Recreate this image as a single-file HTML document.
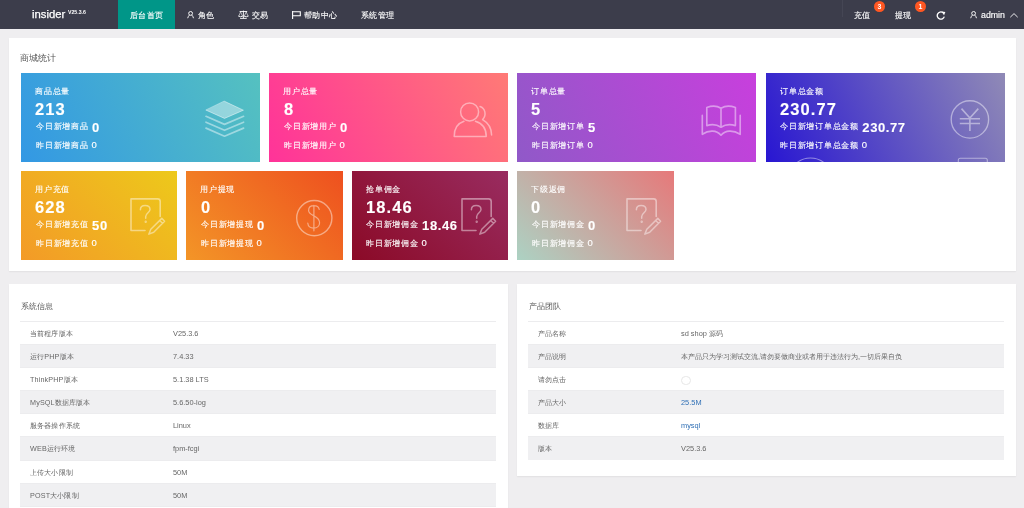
<!DOCTYPE html>
<html><head><meta charset="utf-8">
<style>
*{margin:0;padding:0;box-sizing:border-box}
html,body{width:1024px;height:508px;overflow:hidden}
.a,.t,.ptitle,.card div,.tr span{will-change:transform}
body{background:#efeef0;font-family:"Liberation Sans",sans-serif;position:relative;color:#666}
.a{position:absolute;white-space:nowrap}
#hd{position:absolute;left:0;top:0;width:1024px;height:29.2px;background:#3c3d4b}
#hd .t{position:absolute;color:#fff;font-size:8.4px;letter-spacing:0.35px;line-height:10px;top:9.6px;white-space:nowrap;-webkit-text-stroke:0.12px #fff}
.panel{position:absolute;background:#fff;box-shadow:0 0.6px 1.2px rgba(0,0,0,.06)}
.ptitle{position:absolute;font-size:8.4px;line-height:10px;color:#555;white-space:nowrap}
.card{position:absolute;height:88.5px;color:#fff;overflow:hidden;-webkit-text-stroke:0.12px #fff}
.card .l{position:absolute;left:14px;top:12.9px;font-size:8.4px;letter-spacing:0.75px;line-height:10px;white-space:nowrap}
.card .n{position:absolute;left:14.3px;top:27px;font-size:16.5px;line-height:18px;font-weight:bold;white-space:nowrap;letter-spacing:1.1px}
.card .td{position:absolute;left:14.5px;top:47.8px;font-size:8.4px;letter-spacing:0.75px;line-height:11px;white-space:nowrap}
.card .td b{font-size:13px;letter-spacing:0.6px;position:absolute;left:56.1px;top:-0.2px;line-height:13px}
.card .yd{position:absolute;left:14.5px;top:66.6px;font-size:8.4px;letter-spacing:0.75px;line-height:10px;white-space:nowrap}
.card .yd span{font-size:9.5px;letter-spacing:0;position:absolute;left:55.6px;top:-0.5px;line-height:10px}
.card svg{position:absolute;left:0;top:0}
.ic{fill:none;stroke:rgba(255,255,255,.45);stroke-width:1.5;stroke-linecap:round;stroke-linejoin:round}
.tb{position:absolute;overflow:hidden;box-shadow:inset 0.6px 0 0 #f0f0f0,inset -0.6px 0 0 #f0f0f0}
.tr{position:absolute;left:0;width:100%;height:23.16px;border-top:0.6px solid #ececee}
.tr span{position:absolute;top:0;line-height:23.5px;white-space:nowrap;color:#666}
.c1{left:10.2px;font-size:7.2px;letter-spacing:0.15px}
.c2{left:152.8px;font-size:7.4px}
.blue{color:#2f6fb5;font-weight:normal}
.circ{position:absolute;left:0;top:7.5px;width:9.5px;height:9.5px;border:0.7px solid #e6e6e6;border-radius:50%}
</style></head>
<body>
<div id="hd">
  <div class="a" style="left:31.6px;top:6.8px;font-size:11.3px;line-height:14px;color:#fff;-webkit-text-stroke:0.25px #fff">insider</div>
  <div class="a" style="left:68.3px;top:9.2px;font-size:5.2px;line-height:6px;color:#fff;font-weight:bold">V25.3.6</div>
  <div style="position:absolute;left:117.7px;top:0;width:57.7px;height:29.2px;background:#009688"></div>
  <div class="t" style="left:130px">后台首页</div>
  <svg class="a" style="left:187.4px;top:11px" width="8" height="8" viewBox="0 0 8 8"><circle cx="3.6" cy="2.4" r="1.9" fill="none" stroke="#fff" stroke-width="0.95"/><path d="M0.7 7.2 Q1.2 5.2 2.4 4.1 M6.5 7.2 Q6 5.2 4.8 4.1" stroke="#fff" stroke-width="0.95" fill="none"/></svg>
  <div class="t" style="left:198px">角色</div>
  <svg class="a" style="left:238px;top:10px" width="11" height="9" viewBox="0 0 11 9"><path d="M1.6 1.5 H9.2 M5.4 0.6 V8.3 M2.1 8.4 H8.7" stroke="#fff" stroke-width="0.9" fill="none"/><path d="M2.6 1.8 L0.9 5.9 M2.6 1.8 L4.3 5.9 M8.2 1.8 L6.5 5.9 M8.2 1.8 L9.9 5.9" stroke="#fff" stroke-width="0.6" fill="none"/><path d="M0.2 6 Q2.6 7.6 5 6 M5.8 6 Q8.2 7.6 10.6 6" stroke="#fff" stroke-width="0.9" fill="none"/></svg>
  <div class="t" style="left:251.5px">交易</div>
  <svg class="a" style="left:292px;top:11px" width="9" height="8" viewBox="0 0 9 8"><path d="M0.6 0 V8 M0.6 0.8 H8.3 V4.8 H0.6" stroke="#fff" stroke-width="1.1" fill="none"/></svg>
  <div class="t" style="left:303.5px">帮助中心</div>
  <div class="t" style="left:360.5px">系统管理</div>

  <div style="position:absolute;left:841.6px;top:0;width:0.7px;height:17px;background:rgba(255,255,255,.05)"></div>
  <div class="t" style="left:853.5px">充值</div>
  <div class="a" style="left:874px;top:0.9px;width:11px;height:11px;border-radius:50%;background:#ff5722;color:#fff;font-size:7px;font-weight:bold;line-height:11px;text-align:center">3</div>
  <div class="t" style="left:895px">提现</div>
  <div class="a" style="left:915px;top:0.9px;width:11px;height:11px;border-radius:50%;background:#ff5722;color:#fff;font-size:7px;font-weight:bold;line-height:11px;text-align:center">1</div>
  <svg class="a" style="left:935.5px;top:10.5px" width="10" height="9" viewBox="0 0 10 9"><path d="M8.3 5.6 A3.6 3.6 0 1 1 6.9 1.6" stroke="#fff" stroke-width="1.3" fill="none"/><path d="M5.6 0.4 L9.4 0.9 L8.0 4.2 Z" fill="#fff"/></svg>
  <svg class="a" style="left:970.2px;top:10.6px" width="8" height="8" viewBox="0 0 8 8"><circle cx="3.6" cy="2.4" r="1.9" fill="none" stroke="#fff" stroke-width="0.95"/><path d="M0.7 7.2 Q1.2 5.2 2.4 4.1 M6.5 7.2 Q6 5.2 4.8 4.1" stroke="#fff" stroke-width="0.95" fill="none"/></svg>
  <div class="a" style="left:980.5px;top:10px;font-size:8.8px;line-height:10px;color:#fff;-webkit-text-stroke:0.15px #fff">admin</div>
  <svg class="a" style="left:1010px;top:13px" width="8" height="4.5" viewBox="0 0 8 4.5"><path d="M0.3 4.2 L4 0.6 L7.7 4.2" stroke="#fff" stroke-width="0.9" fill="none"/></svg>
</div>

<!-- panel 1 -->
<div class="panel" style="left:9px;top:38.4px;width:1007px;height:233px"></div>
<div class="ptitle" style="left:19.5px;top:52.5px;font-size:8.7px">商城统计</div>

<div class="card" style="left:21px;top:73.2px;height:88.7px;width:239px;background:linear-gradient(65deg,#3398e4,#55c1c0)">
  <svg width="239" height="89" viewBox="0 0 239 89"><g class="ic"><path d="M203.5 28.3 L222.4 37.2 L203.5 45.4 L185.2 37.2 Z" fill="rgba(255,255,255,.4)" stroke-width="1"/><path d="M185 43.3 L203.5 51.4 L222.6 43.3 M185 49.2 L203.5 57.3 L222.6 49.2 M185 55.1 L203.5 63.2 L222.6 55.1" stroke-width="1.7"/></g></svg><div class="l">商品总量</div><div class="n">213</div>
  <div class="td">今日新增商品 <b>0</b></div><div class="yd">昨日新增商品 <span>0</span></div>
</div>
<div class="card" style="left:269.3px;top:73.2px;height:88.7px;width:239px;background:linear-gradient(65deg,#ff3399,#ff7a76)">
  <svg width="239" height="89" viewBox="0 0 239 89"><g class="ic"><circle cx="200.6" cy="38.9" r="9"/><path d="M195 48.2 C188 50.5 185 56 185.2 63.6 L217.2 63.6 C217.4 56 214 50.5 206.4 48.2"/><path d="M211 33.5 C216 35 218 42 213.6 46.6 C219.5 50 222.6 55 222.6 62"/></g></svg><div class="l">用户总量</div><div class="n">8</div>
  <div class="td">今日新增用户 <b>0</b></div><div class="yd">昨日新增用户 <span>0</span></div>
</div>
<div class="card" style="left:517px;top:73.2px;height:88.7px;width:239px;background:linear-gradient(65deg,#9059c8,#c83fdd)">
  <svg width="239" height="89" viewBox="0 0 239 89"><g class="ic" style="stroke-width:1.65" transform="translate(0 1)"><path d="M189.8 51.6 L189.8 33.5 C195 31.6 200 31.8 204 34.2 C208 31.8 213 31.6 218.4 33.5 L218.4 51.6 C213.5 50 208 50.6 204 53.2 C200 50.6 194.5 50 189.8 51.6 Z M204 34.2 L204 53.2"/><path d="M185.3 41.4 L185.3 60.3 C192 55.8 199.5 56 204 61.2 C208.5 56 216 55.8 223.2 60.3 L223.2 41.4"/></g></svg><div class="l">订单总量</div><div class="n">5</div>
  <div class="td">今日新增订单 <b>5</b></div><div class="yd">昨日新增订单 <span>0</span></div>
</div>
<div class="card" style="left:765.5px;top:73.2px;height:88.7px;width:239px;background:linear-gradient(65deg,#2816d2,#908ab6)">
  <svg width="239" height="89" viewBox="0 0 239 89"><g class="ic"><circle cx="203.9" cy="46.4" r="18.7" stroke-width="1.35"/><path d="M195.5 35.6 L203.9 45 L212.3 35.6 M193.8 45.7 H214 M193.8 50.5 H214 M203.9 45 V58" stroke-width="1.6" stroke-linecap="butt"/><rect x="192.3" y="85.2" width="29" height="12" rx="2" stroke-width="1.1"/><circle cx="44.5" cy="107" r="22" stroke-width="1.1"/></g></svg><div class="l">订单总金额</div><div class="n">230.77</div>
  <div class="td">今日新增订单总金额 <b style="left:82.3px">230.77</b></div><div class="yd">昨日新增订单总金额 <span style="left:81.8px">0</span></div>
</div>

<div class="card" style="left:21px;top:171px;width:156.3px;background:linear-gradient(45deg,#f39a27,#edc91b)">
  <svg width="157" height="89" viewBox="0 0 157 89"><g class="ic"><path d="M124 59.5 L110 59.5 L110 27.9 L136.6 27.9 Q139.2 27.9 139.2 30.5 L139.2 45.5" stroke-width="1.6"/><path d="M119.4 38.8 C119.4 35.9 121.6 34.6 124.2 34.6 C126.9 34.6 129 36.2 129 38.6 C129 41.4 124.7 42.3 124.7 45.6 L124.7 47.2"/><circle cx="124.7" cy="50.8" r="0.5" stroke-width="1.4"/><path d="M140.8 47.4 L143.6 50.2 L132.7 61.2 L127.9 63.1 L129.8 58.3 Z M138.7 49.5 L141.5 52.3"/></g></svg><div class="l">用户充值</div><div class="n">628</div>
  <div class="td">今日新增充值 <b>50</b></div><div class="yd">昨日新增充值 <span>0</span></div>
</div>
<div class="card" style="left:186.3px;top:171px;width:156.3px;background:linear-gradient(45deg,#f39527,#ee501f)">
  <svg width="157" height="89" viewBox="0 0 157 89"><g class="ic"><circle cx="128.3" cy="47.1" r="17.6" stroke-width="1.4"/><path d="M133.2 38.4 C132.6 35.8 130.5 34.7 128 34.7 C124.4 34.7 122.6 37 122.6 39.5 C122.6 45.4 133.6 44 133.6 51.8 C133.6 54.8 131.2 57.1 127.7 57.1 C124.4 57.1 122.1 55 121.8 52.2 M127.9 34.3 V59.8" stroke-width="1.2"/></g></svg><div class="l">用户提现</div><div class="n">0</div>
  <div class="td">今日新增提现 <b>0</b></div><div class="yd">昨日新增提现 <span>0</span></div>
</div>
<div class="card" style="left:351.7px;top:171px;width:156.3px;background:linear-gradient(45deg,#8b0a27,#992c60)">
  <svg width="157" height="89" viewBox="0 0 157 89"><g class="ic"><path d="M124 59.5 L110 59.5 L110 27.9 L136.6 27.9 Q139.2 27.9 139.2 30.5 L139.2 45.5" stroke-width="1.6"/><path d="M119.4 38.8 C119.4 35.9 121.6 34.6 124.2 34.6 C126.9 34.6 129 36.2 129 38.6 C129 41.4 124.7 42.3 124.7 45.6 L124.7 47.2"/><circle cx="124.7" cy="50.8" r="0.5" stroke-width="1.4"/><path d="M140.8 47.4 L143.6 50.2 L132.7 61.2 L127.9 63.1 L129.8 58.3 Z M138.7 49.5 L141.5 52.3"/></g></svg><div class="l">抢单佣金</div><div class="n">18.46</div>
  <div class="td">今日新增佣金 <b>18.46</b></div><div class="yd">昨日新增佣金 <span>0</span></div>
</div>
<div class="card" style="left:517px;top:171px;width:156.7px;background:linear-gradient(45deg,#acd2c3,#e6797a)">
  <svg width="157" height="89" viewBox="0 0 157 89"><g class="ic"><path d="M124 59.5 L110 59.5 L110 27.9 L136.6 27.9 Q139.2 27.9 139.2 30.5 L139.2 45.5" stroke-width="1.6"/><path d="M119.4 38.8 C119.4 35.9 121.6 34.6 124.2 34.6 C126.9 34.6 129 36.2 129 38.6 C129 41.4 124.7 42.3 124.7 45.6 L124.7 47.2"/><circle cx="124.7" cy="50.8" r="0.5" stroke-width="1.4"/><path d="M140.8 47.4 L143.6 50.2 L132.7 61.2 L127.9 63.1 L129.8 58.3 Z M138.7 49.5 L141.5 52.3"/></g></svg><div class="l">下级返佣</div><div class="n">0</div>
  <div class="td">今日新增佣金 <b>0</b></div><div class="yd">昨日新增佣金 <span>0</span></div>
</div>

<!-- panel 2 -->
<div class="panel" style="left:9px;top:283.8px;width:499.3px;height:240px"></div>
<div class="ptitle" style="left:21px;top:301px">系统信息</div>
<div class="tb" style="left:20px;top:320.6px;width:476px;height:208.44px"><div class="tr" style="top:0.00px;background:#fff"><span class="c1">当前程序版本</span><span class="c2">V25.3.6</span></div><div class="tr" style="top:23.16px;background:#f0f0f2"><span class="c1">运行PHP版本</span><span class="c2">7.4.33</span></div><div class="tr" style="top:46.32px;background:#fff"><span class="c1">ThinkPHP版本</span><span class="c2">5.1.38 LTS</span></div><div class="tr" style="top:69.48px;background:#f0f0f2"><span class="c1">MySQL数据库版本</span><span class="c2">5.6.50-log</span></div><div class="tr" style="top:92.64px;background:#fff"><span class="c1">服务器操作系统</span><span class="c2">Linux</span></div><div class="tr" style="top:115.80px;background:#f0f0f2"><span class="c1">WEB运行环境</span><span class="c2">fpm-fcgi</span></div><div class="tr" style="top:138.96px;background:#fff"><span class="c1">上传大小限制</span><span class="c2">50M</span></div><div class="tr" style="top:162.12px;background:#f0f0f2"><span class="c1">POST大小限制</span><span class="c2">50M</span></div><div class="tr" style="top:185.28px;background:#fff"><span class="c1"></span><span class="c2"></span></div></div>

<!-- panel 3 -->
<div class="panel" style="left:516.7px;top:283.8px;width:499.3px;height:192.4px"></div>
<div class="ptitle" style="left:529px;top:301px">产品团队</div>
<div class="tb" style="left:528px;top:320.6px;width:476.3px;height:138.96px"><div class="tr" style="top:0.00px;background:#fff"><span class="c1">产品名称</span><span class="c2">sd shop 源码</span></div><div class="tr" style="top:23.16px;background:#f0f0f2"><span class="c1">产品说明</span><span class="c2">本产品只为学习测试交流,请勿要做商业或者用于违法行为,一切后果自负</span></div><div class="tr" style="top:46.32px;background:#fff"><span class="c1">请勿点击</span><span class="c2"><i class="circ"></i></span></div><div class="tr" style="top:69.48px;background:#f0f0f2"><span class="c1">产品大小</span><span class="c2"><b class="blue">25.5M</b></span></div><div class="tr" style="top:92.64px;background:#fff"><span class="c1">数据库</span><span class="c2"><b class="blue">mysql</b></span></div><div class="tr" style="top:115.80px;background:#f0f0f2"><span class="c1">版本</span><span class="c2">V25.3.6</span></div></div>
</body></html>
